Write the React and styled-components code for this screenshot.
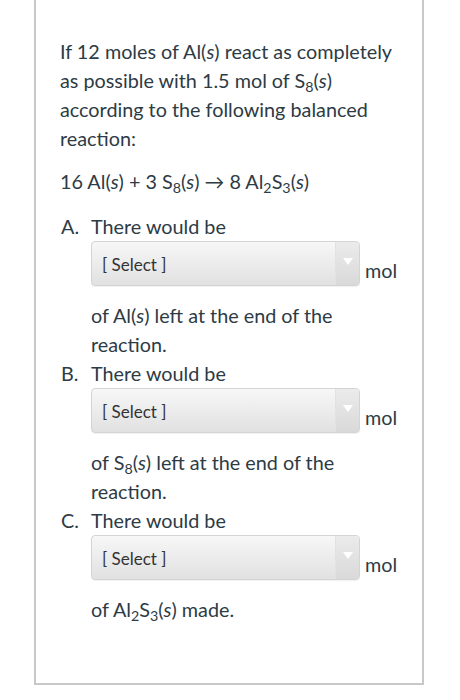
import React from "react";
import styled, { createGlobalStyle } from "styled-components";

const GlobalStyle = createGlobalStyle`
  html, body {
    margin: 0;
    padding: 0;
    background: #ffffff;
  }
  body {
    font-family: Lato, "Noto Sans", sans-serif;
    color: #2d3b45;
  }
`;

const Page = styled.div`
  width: 460px;
  height: 700px;
  overflow: hidden;
`;

const Panel = styled.div`
  margin-left: 34px;
  width: 390px;
  height: 685px;
  box-sizing: border-box;
  border: 2px solid #c8c8c8;
  border-top: none;
  padding: 37px 22px 0 24px;
  font-size: 19.8px;
  line-height: 29px;
`;

const Para = styled.p`
  margin: 0 0 ${(p) => p.$gap || 0}px 0;
`;

const Options = styled.ol`
  list-style: none;
  margin: 0;
  padding: 0;
`;

const Option = styled.li`
  display: grid;
  grid-template-columns: 30px 1fr;
  margin-left: 1px;
`;

const Marker = styled.span``;

const Body = styled.div``;

const SelectRow = styled.div`
  display: flex;
  align-items: flex-end;
  margin-bottom: 15px;
`;

const SelectBox = styled.div`
  width: 269px;
  height: 45px;
  box-sizing: border-box;
  border: 1px solid #d4d4d4;
  border-radius: 4px;
  background: linear-gradient(#f7f7f7, #e1e1e1);
  display: flex;
  align-items: stretch;
  box-shadow: 0 1px 1px rgba(0, 0, 0, 0.06);
`;

const SelectLabel = styled.span`
  flex: 1;
  padding: 2px 0 0 10px;
  font-size: 17px;
  line-height: 41px;
  color: #333333;
`;

const Caret = styled.span`
  width: 24px;
  border-left: 1px solid #e2e2e2;
  background: linear-gradient(#ebebeb, #d9d9d9);
  border-radius: 0 3px 3px 0;
  display: flex;
  justify-content: center;
  padding-top: 16px;
  box-sizing: border-box;
`;

const Unit = styled.span`
  margin-left: 5px;
  margin-bottom: 1px;
`;

const Phase = styled.i`
  font-style: italic;
`;

const Sub = styled.sub`
  font-size: 0.72em;
  line-height: 0;
  vertical-align: -0.25em;
`;

const Arrow = () => (
  <svg width="10" height="7" viewBox="0 0 10 7">
    <path d="M0 0 L10 0 L5 7 Z" fill="#ffffff" />
  </svg>
);

const Select = () => (
  <SelectRow>
    <SelectBox>
      <SelectLabel>[ Select ]</SelectLabel>
      <Caret>
        <Arrow />
      </Caret>
    </SelectBox>
    <Unit>mol</Unit>
  </SelectRow>
);

const S = () => (
  <>
    (<Phase>s</Phase>)
  </>
);

const items = [
  {
    key: "A",
    tail: (
      <>
        of Al<S /> left at the end of the reaction.
      </>
    ),
  },
  {
    key: "B",
    tail: (
      <>
        of S<Sub>8</Sub>
        <S /> left at the end of the reaction.
      </>
    ),
  },
  {
    key: "C",
    tail: (
      <>
        of Al<Sub>2</Sub>S<Sub>3</Sub>
        <S /> made.
      </>
    ),
  },
];

export default function App() {
  return (
    <Page>
      <GlobalStyle />
      <Panel>
        <Para $gap={14}>
          If 12 moles of Al<S /> react as completely as possible with 1.5 mol
          of S<Sub>8</Sub>
          <S /> according to the following balanced reaction:
        </Para>
        <Para $gap={16}>
          16 Al<S /> + 3 S<Sub>8</Sub>
          <S /> → 8 Al<Sub>2</Sub>S<Sub>3</Sub>
          <S />
        </Para>
        <Options>
          {items.map((it) => (
            <Option key={it.key}>
              <Marker>{it.key}.</Marker>
              <Body>
                There would be
                <Select />
                {it.tail}
              </Body>
            </Option>
          ))}
        </Options>
      </Panel>
    </Page>
  );
}
